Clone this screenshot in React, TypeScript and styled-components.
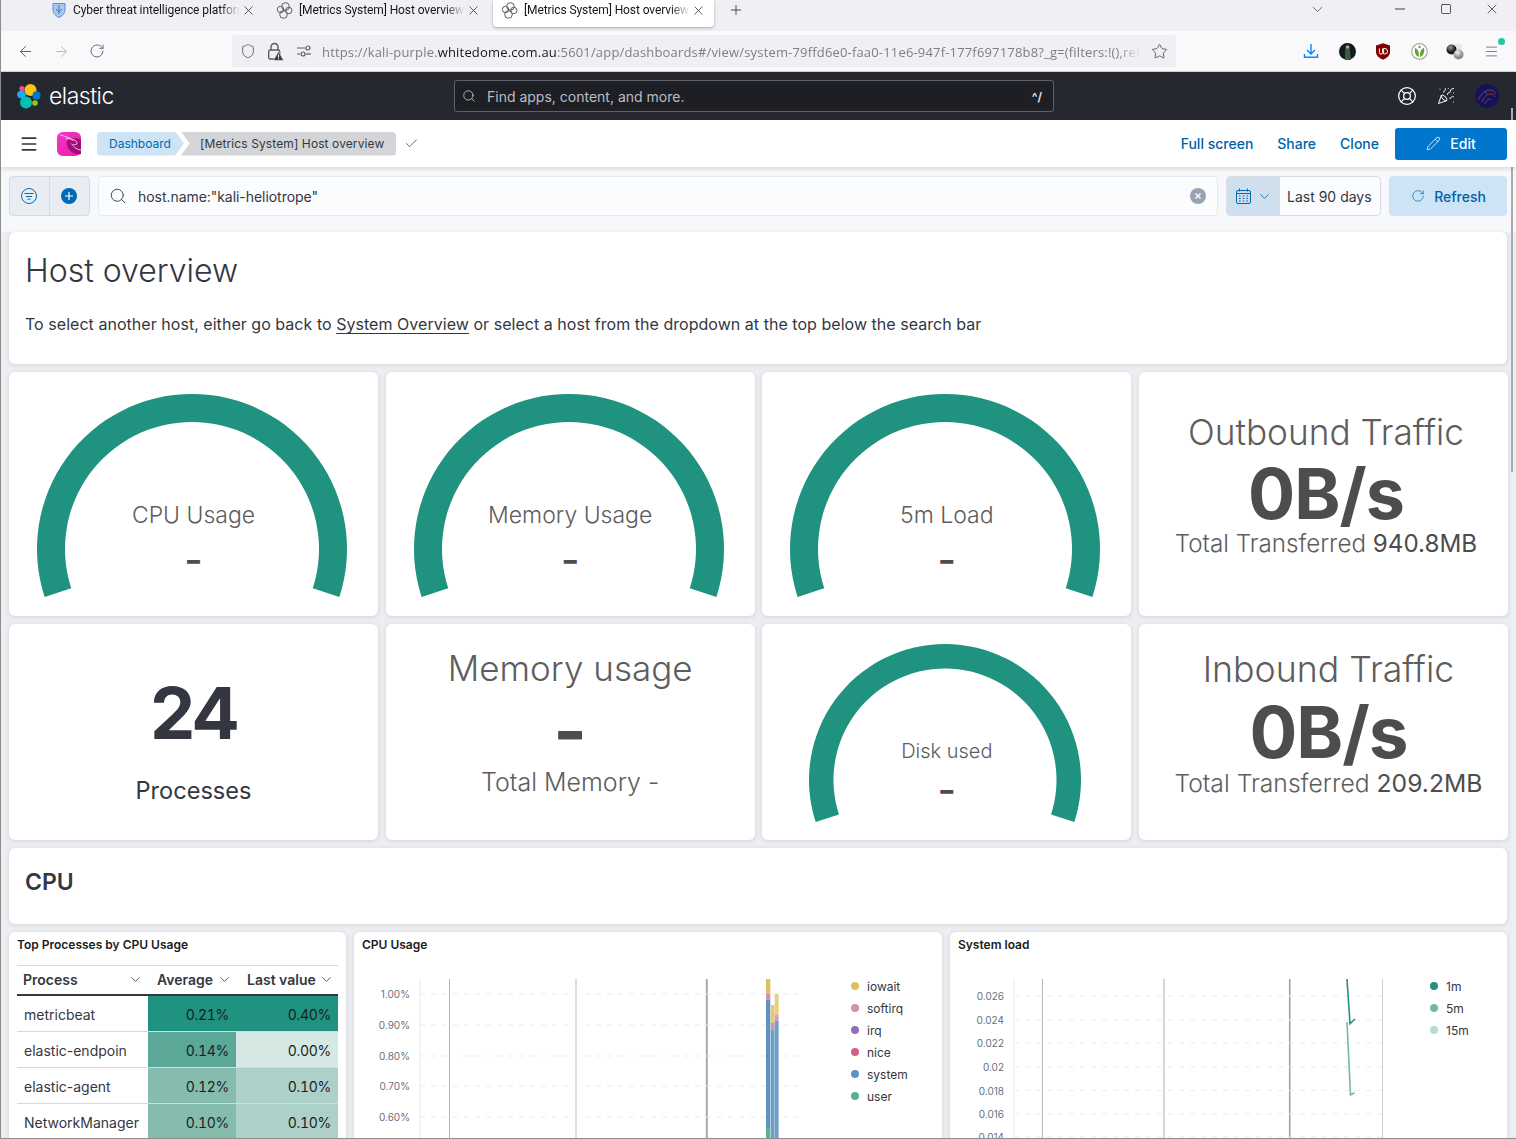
import React from "react";
import styled, { createGlobalStyle } from "styled-components";
import {
  ArrowLeft,
  ArrowRight,
  Check,
  ChevronDown,
  LifeBuoy,
  Menu,
  Minus,
  PartyPopper,
  Pencil,
  Plus,
  RotateCw,
  Search,
  Shield,
  Square,
  Star,
  X,
} from "lucide-react";

const GlobalStyle = createGlobalStyle`
  html, body {
    margin: 0;
    padding: 0;
    background: #f5f7fa;
    font-family: Inter, "Liberation Sans", sans-serif;
  }
  * {
    box-sizing: border-box;
  }
`;

const TEAL = "#209280";

const polar = (cx: number, cy: number, r: number, deg: number) => {
  const a = (deg * Math.PI) / 180;
  return [cx + r * Math.cos(a), cy - r * Math.sin(a)];
};

// arc from the lower left round the top to the lower right
const gaugePath = (r: number, thickness: number) => {
  const inner = r - thickness;
  const sweep = 18;
  const [ax, ay] = polar(r, r, r, 180 + sweep);
  const [bx, by] = polar(r, r, r, -sweep);
  const [cx, cy] = polar(r, r, inner, -sweep);
  const [dx, dy] = polar(r, r, inner, 180 + sweep);
  return `M${ax} ${ay}A${r} ${r} 0 1 1 ${bx} ${by}L${cx} ${cy}A${inner} ${inner} 0 1 0 ${dx} ${dy}Z`;
};

const Gauge = ({
  radius,
  thickness,
  label,
  labelSize,
  top,
  gap,
}: {
  radius: number;
  thickness: number;
  label: string;
  labelSize: number;
  top: number;
  gap: number;
}) => (
  <GaugeBox>
    <svg width={radius * 2} height={radius * 1.32} aria-hidden="true">
      <path d={gaugePath(radius, thickness)} fill={TEAL} />
    </svg>
    <GaugeText $top={top} $gap={gap}>
      <GaugeLabel $size={labelSize}>{label}</GaugeLabel>
      <GaugeDash>-</GaugeDash>
    </GaugeText>
  </GaugeBox>
);

const ElasticMark = () => (
  <svg width="26" height="26" viewBox="0 0 26 26" aria-hidden="true">
    <circle cx="14.5" cy="7" r="6" fill="#fec514" />
    <ellipse cx="5.5" cy="11.5" rx="4.5" ry="4" fill="#1ba9f5" />
    <circle cx="6" cy="5.5" r="2.6" fill="#f04e98" />
    <ellipse cx="20.5" cy="12.5" rx="4" ry="4.2" fill="#0077cc" />
    <circle cx="10" cy="19.5" r="6" fill="#00bfb3" />
    <circle cx="19" cy="20" r="2.8" fill="#93c90e" />
  </svg>
);

const KaliMark = () => (
  <svg width="24" height="24" viewBox="0 0 25 25" aria-hidden="true">
    <defs>
      <linearGradient id="kali" x1="0" y1="0" x2="1" y2="1">
        <stop offset="0" stopColor="#f237c9" />
        <stop offset="1" stopColor="#e81f9f" />
      </linearGradient>
    </defs>
    <rect width="25" height="25" rx="6" fill="url(#kali)" />
    <path d="M10 11c2-6 9-6 15-3v15c-6 1-11-2-14-7z" fill="#a30d7b" />
    <path
      d="M3 3c5 1 9 3 12 4 4 1 6 3 6 5 0 1-2 1-4 1M9 7c3-1 6 1 8 2M15 12c3 4 5 6 10 7"
      fill="none"
      stroke="#f8d4ee"
      strokeWidth="0.9"
    />
  </svg>
);

const FilterCircle = () => (
  <svg width="16" height="16" viewBox="0 0 16 16" fill="none" stroke="#006bb4" aria-hidden="true">
    <circle cx="8" cy="8" r="7.5" />
    <path d="M3.5 5.5h9M5 8.5h6M6.5 11.2h3" />
  </svg>
);

const PlusCircle = () => (
  <svg width="16" height="16" viewBox="0 0 16 16" aria-hidden="true">
    <circle cx="8" cy="8" r="8" fill="#006bb4" />
    <path d="M8 4v8M4 8h8" stroke="#fff" strokeWidth="1.2" />
  </svg>
);

const CalendarIcon = () => (
  <svg width="15" height="16" viewBox="0 0 15 16" fill="none" stroke="#006bb4" aria-hidden="true">
    <rect x="0.5" y="2.5" width="14" height="13" rx="1.5" />
    <path d="M0.5 5.5h14M3.5 0.5v3M11.5 0.5v3" />
    <path
      d="M3 8h1.6M6.7 8h1.6M10.4 8h1.6M3 10.5h1.6M6.7 10.5h1.6M10.4 10.5h1.6M3 13h1.6M6.7 13h1.6M10.4 13h1.6"
      strokeWidth="1.2"
    />
  </svg>
);

const ClearIcon = () => (
  <svg width="16" height="16" viewBox="0 0 16 16" aria-hidden="true">
    <circle cx="8" cy="8" r="8" fill="#98a2b3" />
    <path d="M5.5 5.5l5 5M10.5 5.5l-5 5" stroke="#fff" strokeWidth="1.4" />
  </svg>
);

const ShieldTab = () => (
  <svg width="16" height="16" viewBox="0 0 16 16" aria-hidden="true">
    <path d="M2 1.5h12v6.5c0 3.5-3 6-6 7.5-3-1.5-6-4-6-7.5z" fill="#a9c8ee" stroke="#5b8fd6" />
    <path d="M8 3v9M5 7l3 3 3-3" stroke="#3f74c4" fill="none" />
  </svg>
);

const BlobTab = () => (
  <svg width="17" height="17" viewBox="0 0 17 17" fill="none" stroke="#5b5b66" aria-hidden="true">
    <circle cx="9.5" cy="4.5" r="3.8" />
    <circle cx="4.5" cy="7.5" r="3.2" />
    <circle cx="12.8" cy="8.5" r="3.2" />
    <circle cx="7.5" cy="12.5" r="3.8" />
  </svg>
);

const LockWarning = () => (
  <svg width="17" height="19" viewBox="0 0 17 19" aria-hidden="true">
    <path d="M4 8V5a3.5 3.5 0 017 0v3" fill="none" stroke="#5b5b66" strokeWidth="1.4" />
    <rect x="1.7" y="8" width="11" height="9" rx="1.5" fill="none" stroke="#5b5b66" strokeWidth="1.4" />
    <path d="M11.5 9.5l5.2 9h-10.4z" fill="#3a3a40" stroke="#f0f0f4" strokeWidth="0.6" />
    <path d="M11.5 12.5v3M11.5 16.3v1" stroke="#fff" strokeWidth="1" />
  </svg>
);

const PermissionIcon = () => (
  <svg width="16" height="14" viewBox="0 0 16 14" fill="none" stroke="#5b5b66" strokeWidth="1.2" aria-hidden="true">
    <path d="M1 4h8M1 10h3" />
    <circle cx="12" cy="4" r="2" />
    <circle cx="7" cy="10" r="2" />
    <path d="M10 10h5" />
  </svg>
);

const DownloadIcon = () => (
  <svg width="16" height="16" viewBox="0 0 16 16" fill="none" stroke="#0a84ff" strokeWidth="1.4" aria-hidden="true">
    <path d="M8 1v9.5M4 7l4 4 4-4M1.5 11v3.2h13V11" />
  </svg>
);

const PhotoExt = () => (
  <svg width="17" height="17" viewBox="0 0 17 17" aria-hidden="true">
    <circle cx="8.5" cy="8.5" r="8.5" fill="#101c1e" />
    <path d="M7 3h3l1 4 1 10H6l0-10z" fill="#3a5a44" />
    <circle cx="8.6" cy="4" r="1.8" fill="#b9a68a" />
  </svg>
);

const UblockExt = () => (
  <svg width="16" height="17" viewBox="0 0 16 17" aria-hidden="true">
    <path d="M8 0.3l7 2.2v6.5c0 3.5-3.5 6.3-7 7.7C4.5 15.3 1 12.5 1 9V2.5z" fill="#800000" />
    <path d="M4.4 5.5v4a1.6 1.6 0 003.2 0v-4M8.6 5.5v5.5h1.2a2.7 2.7 0 000-5.5z" fill="none" stroke="#fff" strokeWidth="1" />
  </svg>
);

const GreenExt = () => (
  <svg width="17" height="17" viewBox="0 0 17 17" aria-hidden="true">
    <circle cx="8.5" cy="8.5" r="7.8" fill="#fff" stroke="#a8aba3" strokeWidth="1.2" />
    <path d="M4 5c3 1 4 3 4 9-3-1-5-4-4-9zM13 5c-3 1-4 3-4 9 3-1 5-4 4-9z" fill="#6aa232" />
    <circle cx="8.5" cy="4" r="1.2" fill="#6aa232" />
  </svg>
);

const BallsExt = () => (
  <svg width="18" height="17" viewBox="0 0 18 17" aria-hidden="true">
    <defs>
      <radialGradient id="ballDark" cx="0.4" cy="0.3">
        <stop offset="0" stopColor="#9a9a9a" />
        <stop offset="1" stopColor="#141414" />
      </radialGradient>
      <radialGradient id="ballLight" cx="0.4" cy="0.3">
        <stop offset="0" stopColor="#f2f2f2" />
        <stop offset="1" stopColor="#8c8c8c" />
      </radialGradient>
    </defs>
    <circle cx="12" cy="4.5" r="4" fill="#e6e6e6" />
    <circle cx="5.5" cy="6.5" r="5" fill="url(#ballDark)" />
    <circle cx="12.5" cy="11.5" r="5" fill="url(#ballLight)" />
  </svg>
);

const Avatar = () => (
  <svg width="24" height="24" viewBox="0 0 24 24" aria-hidden="true">
    <circle cx="12" cy="12" r="12" fill="#14125a" />
    <path
      d="M3 16c3-6 7-10 12-10 3 0 5 2 6 4M7 18c2-5 5-8 9-8 2 0 3 1 4 3M10 20c1-3 3-5 6-5M9 7l3 3"
      fill="none"
      stroke="#a33a3a"
      strokeWidth="0.9"
    />
  </svg>
);

const cpuStack = [
  { x: 412, w: 4.3, parts: [[47, 15, "#dfc05a"], [62, 6, "#d590b3"], [68, 127, "#6092c0"], [195, 11, "#54b399"]] },
  { x: 416.7, w: 3.8, parts: [[73, 18, "#e3cb75"], [91, 7, "#d590b3"], [98, 110, "#6f9ec8"]] },
  { x: 420.7, w: 3.9, parts: [[62, 21, "#e6d07f"], [83, 6, "#d99cbc"], [89, 119, "#6f9ec8"]] },
] as const;

const VerticalLines = ({ lines, height }: { lines: [number, number, string][]; height: number }) => (
  <>
    {lines.map(([x, w, c]) => (
      <line key={x} x1={x} x2={x} y1={47} y2={height} stroke={c} strokeWidth={w} />
    ))}
  </>
);

const CpuChart = () => (
  <ChartSvg width="490" height="207" aria-hidden="true">
    <line x1="66" x2="66" y1="47" y2="207" stroke="#eef0f3" strokeWidth="1.5" />
    <VerticalLines
      height={207}
      lines={[
        [95.5, 1, "#b5b5b5"],
        [222, 1.2, "#c8c8c8"],
        [352.8, 2, "#a8a8a8"],
      ]}
    />
    {[
      [62, "1.00%"],
      [93, "0.90%"],
      [124, "0.80%"],
      [154, "0.70%"],
      [185, "0.60%"],
    ].map(([y, t]) => (
      <g key={t}>
        <line x1="66" x2="448" y1={y} y2={y} stroke="#e9ebee" strokeDasharray="5 6" />
        <AxisText x="56" y={Number(y) + 4} textAnchor="end">
          {t}
        </AxisText>
      </g>
    ))}
    {cpuStack.map((bar) =>
      bar.parts.map(([y, h, c]) => (
        <rect key={`${bar.x}-${y}`} x={bar.x} y={y} width={bar.w} height={h} fill={c} />
      )),
    )}
  </ChartSvg>
);

const LoadChart = () => (
  <ChartSvg width="473" height="207" aria-hidden="true">
    <line x1="64" x2="64" y1="47" y2="207" stroke="#eef0f3" strokeWidth="1.5" />
    <VerticalLines
      height={207}
      lines={[
        [92.4, 1, "#b5b5b5"],
        [214, 1.5, "#c8c8c8"],
        [339.7, 1.5, "#9c9c9c"],
        [432.5, 1, "#cfcfcf"],
      ]}
    />
    {[
      [64.3, "0.026"],
      [88, "0.024"],
      [111, "0.022"],
      [135, "0.02"],
      [158.5, "0.018"],
      [182, "0.016"],
      [205, "0.014"],
    ].map(([y, t]) => (
      <g key={t}>
        <line x1="64" x2="433" y1={y} y2={y} stroke="#e9ebee" strokeDasharray="5 6" />
        <AxisText x="54" y={Number(y) + 4} textAnchor="end">
          {t}
        </AxisText>
      </g>
    ))}
    <polyline points="397,47 400,91.7 405,87" fill="none" stroke={TEAL} strokeWidth="1.6" />
    <polyline points="397,90 400.5,163 404.5,160.7" fill="none" stroke="#73b8a8" strokeWidth="1.6" />
  </ChartSvg>
);

const cpuLegend = [
  ["iowait", "#dfc05a"],
  ["softirq", "#d590b3"],
  ["irq", "#9170b8"],
  ["nice", "#d36086"],
  ["system", "#6092c0"],
  ["user", "#54b399"],
];
const loadLegend = [
  ["1m", TEAL],
  ["5m", "#73b8a8"],
  ["15m", "#b8dacf"],
];

const processes = [
  ["metricbeat", "0.21%", "#209280", "0.40%", "#209280"],
  ["elastic-endpoin", "0.14%", "#5ba899", "0.00%", "#d6e8e3"],
  ["elastic-agent", "0.12%", "#86bcae", "0.10%", "#add1c8"],
  ["NetworkManager", "0.10%", "#86bcae", "0.10%", "#add1c8"],
];

const Legend = ({ items }: { items: string[][] }) => (
  <LegendList>
    {items.map(([name, color]) => (
      <LegendItem key={name}>
        <LegendDot $color={color} />
        {name}
      </LegendItem>
    ))}
  </LegendList>
);

const TabItem = ({ icon, title, active }: { icon: React.ReactNode; title: string; active?: boolean }) => (
  <Tab $active={active}>
    {icon}
    <TabTitle>{title}</TabTitle>
    <X size={15} strokeWidth={1.2} color="#2b2a33" />
  </Tab>
);

export default function App() {
  return (
    <Page>
      <GlobalStyle />
      <TabStrip>
        <TabItem icon={<ShieldTab />} title="Cyber threat intelligence platform" />
        <TabItem icon={<BlobTab />} title="[Metrics System] Host overview" />
        <TabItem icon={<BlobTab />} title="[Metrics System] Host overview" active />
        <NewTab>
          <Plus size={16} strokeWidth={1.2} color="#2b2a33" />
        </NewTab>
        <WindowControls>
          <ChevronDown size={17} strokeWidth={1.2} color="#55555e" />
          <WindowButtons>
            <Minus size={16} strokeWidth={1.2} color="#111" />
            <Square size={12} strokeWidth={1.4} color="#111" />
            <X size={16} strokeWidth={1} color="#111" />
          </WindowButtons>
        </WindowControls>
      </TabStrip>

      <NavBar>
        <NavButtons>
          <NavButton>
            <ArrowLeft size={17} strokeWidth={1.3} color="#55555e" />
          </NavButton>
          <NavButton>
            <ArrowRight size={17} strokeWidth={1.3} color="#b5b5ba" />
          </NavButton>
          <NavButton>
            <RotateCw size={16} strokeWidth={1.3} color="#55555e" />
          </NavButton>
        </NavButtons>
        <UrlBar>
          <Shield size={16} strokeWidth={1.3} color="#55555e" />
          <LockWarning />
          <PermissionIcon />
          <UrlText>
            https://kali-purple.<b>whitedome.com.au</b>:5601/app/dashboards#/view/system-79ffd6e0-faa0-11e6-947f-177f697178b8?_g=(filters:!(),refreshInterval
          </UrlText>
          <Star size={17} strokeWidth={1.3} color="#55555e" />
        </UrlBar>
        <Extensions>
          <NavButton>
            <DownloadIcon />
          </NavButton>
          <NavButton>
            <PhotoExt />
          </NavButton>
          <NavButton>
            <UblockExt />
          </NavButton>
          <NavButton>
            <GreenExt />
          </NavButton>
          <NavButton>
            <BallsExt />
          </NavButton>
          <NavButton>
            <Menu size={15} strokeWidth={1.2} color="#55555e" />
            <UpdateDot />
          </NavButton>
        </Extensions>
      </NavBar>

      <KibanaHeader>
        <Brand>
          <ElasticMark />
          <BrandName>elastic</BrandName>
        </Brand>
        <GlobalSearch>
          <Search size={14} strokeWidth={1.3} color="#d4dae5" />
          <GlobalSearchText>Find apps, content, and more.</GlobalSearchText>
          <Shortcut>^/</Shortcut>
        </GlobalSearch>
        <HeaderIcons>
          <LifeBuoy size={20} strokeWidth={1.5} color="#fff" />
          <PartyPopper size={18} strokeWidth={1.3} color="#fff" />
          <Avatar />
        </HeaderIcons>
      </KibanaHeader>

      <AppBar>
        <Menu size={20} strokeWidth={2} color="#343741" />
        <KaliSlot>
          <KaliMark />
        </KaliSlot>
        <Crumbs>
          <CrumbLink>Dashboard</CrumbLink>
          <CrumbCurrent>[Metrics System] Host overview</CrumbCurrent>
        </Crumbs>
        <Check size={15} strokeWidth={1.2} color="#343741" />
        <AppActions>
          <ActionLink>Full screen</ActionLink>
          <ActionLink>Share</ActionLink>
          <ActionLink>Clone</ActionLink>
          <EditButton>
            <Pencil size={15} strokeWidth={1.3} color="#fff" />
            Edit
          </EditButton>
        </AppActions>
      </AppBar>

      <QueryBar>
        <FilterGroup>
          <FilterCell>
            <FilterCircle />
          </FilterCell>
          <FilterCell>
            <PlusCircle />
          </FilterCell>
        </FilterGroup>
        <QueryInput>
          <Search size={18} strokeWidth={1.2} color="#343741" />
          <QueryText>host.name:"kali-heliotrope"</QueryText>
          <ClearIcon />
        </QueryInput>
        <DatePicker>
          <DateToggle>
            <CalendarIcon />
            <ChevronDown size={15} strokeWidth={1.4} color="#006bb4" />
          </DateToggle>
          <DateValue>Last 90 days</DateValue>
        </DatePicker>
        <RefreshButton>
          <RotateCw size={14} strokeWidth={1.2} color="#006bb4" />
          Refresh
        </RefreshButton>
      </QueryBar>

      <Dashboard>
        <IntroPanel>
          <IntroTitle>Host overview</IntroTitle>
          <IntroText>
            To select another host, either go back to <IntroLink>System Overview</IntroLink> or select a host from the dropdown at the top below the search bar
          </IntroText>
        </IntroPanel>

        <MetricGrid>
          <GaugePanel>
            <Gauge radius={155} thickness={28} label="CPU Usage" labelSize={23} top={106} gap={15} />
          </GaugePanel>
          <GaugePanel>
            <Gauge radius={155} thickness={28} label="Memory Usage" labelSize={23} top={106} gap={15} />
          </GaugePanel>
          <GaugePanel>
            <Gauge radius={155} thickness={28} label="5m Load" labelSize={23} top={106} gap={15} />
          </GaugePanel>
          <TrafficPanel $shift={5}>
            <MetricTitle $size={35.2}>Outbound Traffic</MetricTitle>
            <TrafficValue>0B/s</TrafficValue>
            <MetricFoot $size={24.2}>
              Total Transferred <strong>940.8MB</strong>
            </MetricFoot>
          </TrafficPanel>
          <ProcessPanel>
            <ProcessCount>24</ProcessCount>
            <ProcessLabel>Processes</ProcessLabel>
          </ProcessPanel>
          <MemoryPanel>
            <MetricTitle $size={35}>Memory usage</MetricTitle>
            <MemoryDash>-</MemoryDash>
            <MetricFoot $size={25}>Total Memory -</MetricFoot>
          </MemoryPanel>
          <DiskPanel>
            <Gauge radius={136} thickness={24.5} label="Disk used" labelSize={20} top={92} gap={9} />
          </DiskPanel>
          <InboundPanel $shift={10}>
            <MetricTitle $size={35.7}>Inbound Traffic</MetricTitle>
            <InboundValue>0B/s</InboundValue>
            <MetricFoot $size={24.7}>
              Total Transferred <strong>209.2MB</strong>
            </MetricFoot>
          </InboundPanel>
        </MetricGrid>

        <SectionPanel>
          <SectionTitle>CPU</SectionTitle>
        </SectionPanel>

        <ChartRow>
          <TablePanel>
            <PanelTitle>Top Processes by CPU Usage</PanelTitle>
            <ProcessTable>
              <HeadRow>
                <HeadCell>
                  Process
                  <ChevronDown size={15} strokeWidth={1.3} color="#343741" />
                </HeadCell>
                <HeadCell>
                  Average
                  <ChevronDown size={15} strokeWidth={1.3} color="#343741" />
                </HeadCell>
                <HeadCell>
                  Last value
                  <ChevronDown size={15} strokeWidth={1.3} color="#343741" />
                </HeadCell>
              </HeadRow>
              {processes.map(([name, avg, avgColor, last, lastColor]) => (
                <BodyRow key={name}>
                  <NameCell>{name}</NameCell>
                  <ValueCell $bg={avgColor}>{avg}</ValueCell>
                  <ValueCell $bg={lastColor}>{last}</ValueCell>
                </BodyRow>
              ))}
            </ProcessTable>
          </TablePanel>

          <ChartPanel>
            <PanelTitle>CPU Usage</PanelTitle>
            <CpuChart />
            <Legend items={cpuLegend} />
          </ChartPanel>

          <ChartPanel>
            <PanelTitle>System load</PanelTitle>
            <LoadChart />
            <Legend items={loadLegend} />
          </ChartPanel>
        </ChartRow>
      </Dashboard>
      <ScrollThumb />
    </Page>
  );
}

const Page = styled.div`
  position: relative;
  width: 1516px;
  height: 1139px;
  overflow: hidden;
  display: flex;
  flex-direction: column;
  background: #f5f7fa;
  border-left: 1px solid #8d8d8d;
  border-bottom: 1px solid #8d8d8d;
`;

const TabStrip = styled.div`
  flex: 0 0 31px;
  display: flex;
  gap: 4px;
  padding-left: 42px;
  background: #f0f0f4;
  align-items: flex-start;
`;

const Tab = styled.div<{ $active?: boolean }>`
  width: 221px;
  height: 27px;
  display: flex;
  align-items: center;
  gap: 6px;
  padding: 0 8px 7px 8px;
  background: ${({ $active }) => ($active ? "#fff" : "transparent")};
  border-radius: 0 0 4px 4px;
  box-shadow: ${({ $active }) => ($active ? "0 1px 3px rgba(0,0,0,.3)" : "none")};
  svg {
    flex: none;
  }
  svg:last-child {
    margin-left: -5px;
  }
`;

const TabTitle = styled.span`
  flex: 1;
  font-family: Roboto, sans-serif;
  font-size: 12px;
  letter-spacing: -0.1px;
  color: #15141a;
  white-space: nowrap;
  overflow: hidden;
  -webkit-mask-image: linear-gradient(to right, #000 88%, transparent);
  mask-image: linear-gradient(to right, #000 88%, transparent);
`;

const NewTab = styled.div`
  margin: 2px 0 0 10px;
  height: 16px;
`;

const WindowControls = styled.div`
  margin-left: auto;
  display: flex;
  align-items: center;
  height: 18px;
  padding-right: 16px;
  gap: 66px;
`;

const WindowButtons = styled.div`
  display: flex;
  align-items: center;
  gap: 32px;
`;

const NavBar = styled.div`
  flex: 0 0 41px;
  display: flex;
  align-items: center;
  padding: 0 6px;
  background: #f9f9fb;
  border-bottom: 1px solid #cfcfd8;
`;

const NavButtons = styled.div`
  display: flex;
  width: 225px;
`;

const NavButton = styled.div`
  position: relative;
  width: 36px;
  height: 30px;
  display: flex;
  align-items: center;
  justify-content: center;
`;

const UrlBar = styled.div`
  width: 944px;
  height: 32px;
  display: flex;
  align-items: center;
  gap: 10px;
  padding: 0 8px;
  background: #f0f0f4;
  border-radius: 4px;
  svg {
    flex: none;
  }
  svg:nth-of-type(2) {
    margin-left: 1px;
  }
  svg:nth-of-type(3) {
    margin-left: 2px;
  }
`;

const UrlText = styled.div`
  width: 820px;
  padding-top: 1px;
  font-family: "Open Sans", sans-serif;
  font-size: 13px;
  letter-spacing: 0.17px;
  color: #7d7d85;
  white-space: nowrap;
  overflow: hidden;
  -webkit-mask-image: linear-gradient(to right, #000 97%, transparent);
  mask-image: linear-gradient(to right, #000 97%, transparent);
  b {
    font-weight: 400;
    color: #15141a;
  }
`;

const Extensions = styled.div`
  display: flex;
  margin-left: 117px;
`;

const UpdateDot = styled.span`
  position: absolute;
  top: 2px;
  right: 4px;
  width: 7px;
  height: 7px;
  border-radius: 50%;
  background: #2ac3a2;
`;

const KibanaHeader = styled.header`
  flex: 0 0 48px;
  display: grid;
  grid-template-columns: 453px 600px 1fr;
  align-items: center;
  background: #25282f;
`;

const Brand = styled.div`
  display: flex;
  align-items: center;
  gap: 7px;
  padding-left: 15px;
`;

const BrandName = styled.span`
  font-size: 23px;
  font-weight: 300;
  color: #fff;
  letter-spacing: -0.5px;
`;

const GlobalSearch = styled.div`
  height: 32px;
  display: flex;
  align-items: center;
  gap: 11px;
  padding: 0 11px 0 7px;
  border: 1px solid #5c6068;
  border-radius: 3px;
  background: #1d1f25;
`;

const GlobalSearchText = styled.span`
  flex: 1;
  font-size: 14px;
  color: #b9bdc5;
`;

const Shortcut = styled.span`
  font-size: 12px;
  font-weight: 600;
  color: #e6e8ec;
`;

const HeaderIcons = styled.div`
  display: flex;
  align-items: center;
  justify-content: flex-end;
  gap: 20px;
  padding-right: 17px;
`;

const AppBar = styled.div`
  position: relative;
  z-index: 1;
  flex: 0 0 47px;
  display: flex;
  align-items: center;
  padding: 0 9px 0 18px;
  background: #fff;
  box-shadow: 0 2px 4px rgba(0, 0, 0, 0.12);
  > svg:last-of-type {
    margin-left: 8px;
  }
`;

const KaliSlot = styled.div`
  display: flex;
  margin: 0 16px 0 18px;
`;

const Crumbs = styled.div`
  display: flex;
  height: 24px;
  font-size: 12px;
  line-height: 24px;
`;

const CrumbLink = styled.span`
  width: 87px;
  padding-left: 12px;
  background: #cce4f5;
  color: #006bb4;
  border-radius: 4px 0 0 4px;
  clip-path: polygon(0 0, 90% 0, 100% 50%, 90% 100%, 0 100%);
`;

const CrumbCurrent = styled.span`
  width: 215px;
  margin-left: -3px;
  padding-left: 19px;
  background: #d3d5d9;
  color: #343741;
  letter-spacing: 0.1px;
  border-radius: 0 4px 4px 0;
  clip-path: polygon(0 0, 100% 0, 100% 100%, 0 100%, 4% 50%);
`;

const AppActions = styled.div`
  margin-left: auto;
  display: flex;
  align-items: center;
  gap: 24px;
`;

const ActionLink = styled.span`
  font-size: 14px;
  font-weight: 500;
  color: #0061a6;
`;

const EditButton = styled.div`
  width: 112px;
  height: 32px;
  margin-left: -8px;
  display: flex;
  align-items: center;
  justify-content: center;
  gap: 9px;
  border-radius: 3px;
  background: #0077cc;
  color: #fff;
  font-size: 14px;
  font-weight: 500;
`;

const QueryBar = styled.div`
  flex: 0 0 65px;
  display: flex;
  gap: 8px;
  padding: 9px 8px 16px 8px;
  background: #f7f8fb;
`;

const FilterGroup = styled.div`
  display: flex;
  width: 81px;
  border: 1px solid #d3dae6;
  border-radius: 4px;
  background: #e9edf3;
`;

const FilterCell = styled.div`
  flex: 1;
  display: flex;
  align-items: center;
  justify-content: center;
  padding-right: 1px;
  & + & {
    border-left: 1px solid #d3dae6;
  }
`;

const QueryInput = styled.div`
  width: 1120px;
  display: flex;
  align-items: center;
  gap: 11px;
  padding: 0 11px 0 10px;
  border: 1px solid #e4e8f0;
  border-radius: 4px;
  background: #fbfcfd;
`;

const QueryText = styled.span`
  flex: 1;
  font-size: 14px;
  letter-spacing: -0.05px;
  color: #343741;
`;

const DatePicker = styled.div`
  width: 155px;
  display: flex;
  border: 1px solid #d8dde8;
  border-radius: 4px;
  background: #fbfcfd;
  overflow: hidden;
`;

const DateToggle = styled.div`
  width: 53px;
  display: flex;
  align-items: center;
  justify-content: center;
  gap: 6px;
  background: #cfdfee;
`;

const DateValue = styled.div`
  flex: 1;
  display: flex;
  align-items: center;
  padding-left: 7px;
  font-size: 14px;
  color: #343741;
`;

const RefreshButton = styled.div`
  width: 118px;
  display: flex;
  align-items: center;
  justify-content: center;
  gap: 9px;
  padding-left: 1px;
  border-radius: 4px;
  background: #cce4f5;
  color: #0061a6;
  font-size: 14px;
  font-weight: 500;
`;

const ScrollThumb = styled.div`
  position: absolute;
  top: 108px;
  right: 3px;
  width: 2px;
  height: 364px;
  background: #a9abb0;
`;

const Dashboard = styled.main`
  flex: 1;
  min-height: 0;
  display: flex;
  flex-direction: column;
  gap: 8px;
  padding: 0 8px;
  background: #eceef2;
`;

const Panel = styled.section`
  background: #fff;
  border-radius: 6px;
  box-shadow: 0 1px 4px rgba(60, 66, 82, 0.16);
  overflow: hidden;
`;

const IntroPanel = styled(Panel)`
  flex: 0 0 132px;
  padding: 18px 16px 0;
  margin-right: 1px;
`;

const IntroTitle = styled.h1`
  margin: 0;
  font-size: 32px;
  line-height: 42px;
  font-weight: 300;
  color: #343741;
`;

const IntroText = styled.p`
  margin: 20px 0 0;
  font-size: 16px;
  line-height: 24px;
  letter-spacing: 0.037px;
  color: #343741;
`;

const IntroLink = styled.span`
  text-decoration: underline;
  text-underline-offset: 3px;
`;

const MetricGrid = styled.div`
  flex: 0 0 468px;
  display: grid;
  grid-template-columns: repeat(4, 369px);
  grid-template-rows: 244px 216px;
  gap: 8px 7.66px;
`;

const GaugePanel = styled(Panel)`
  display: flex;
  justify-content: center;
  padding: 22px 3px 0 0;
`;

const DiskPanel = styled(GaugePanel)`
  padding-top: 20px;
`;

const GaugeBox = styled.div`
  position: relative;
`;

const GaugeText = styled.div<{ $top: number; $gap: number }>`
  position: absolute;
  top: ${({ $top }) => $top}px;
  left: 0;
  right: -3px;
  display: flex;
  flex-direction: column;
  align-items: center;
  gap: ${({ $gap }) => $gap}px;
`;

const GaugeLabel = styled.span<{ $size: number }>`
  font-size: ${({ $size }) => $size}px;
  line-height: 30px;
  font-weight: 300;
  color: #5d5d5d;
`;

const GaugeDash = styled.span`
  font-size: 40px;
  line-height: 30px;
  font-weight: 500;
  color: #4d4d4d;
`;

const MetricPanel = styled(Panel)`
  display: flex;
  flex-direction: column;
  align-items: center;
  color: #5d5d5d;
`;

const TrafficPanel = styled(MetricPanel)<{ $shift: number }>`
  padding: 37px 0 0 ${({ $shift }) => $shift}px;
`;

const InboundPanel = styled(MetricPanel)<{ $shift: number }>`
  padding: 22px 0 0 ${({ $shift }) => $shift}px;
`;

const MemoryPanel = styled(MetricPanel)`
  padding-top: 21px;
`;

const MetricTitle = styled.div<{ $size: number }>`
  font-size: ${({ $size }) => $size}px;
  line-height: 46px;
  font-weight: 300;
  white-space: nowrap;
`;

const TrafficValue = styled.div`
  margin-top: 4px;
  font-size: 70px;
  line-height: 70px;
  font-weight: 700;
  color: #4d4d4d;
  letter-spacing: -1px;
`;

const InboundValue = styled(TrafficValue)`
  margin-top: 5px;
  font-size: 71px;
  line-height: 71px;
`;

const MemoryDash = styled.div`
  margin-top: 4px;
  font-size: 72px;
  line-height: 72px;
  font-weight: 700;
  color: #4d4d4d;
`;

const MetricFoot = styled.div<{ $size: number }>`
  font-size: ${({ $size }) => $size}px;
  line-height: 30px;
  font-weight: 300;
  white-space: nowrap;
  strong {
    font-weight: 400;
    color: #4d4d4d;
  }
`;

const ProcessPanel = styled(MetricPanel)`
  padding-top: 44px;
`;

const ProcessCount = styled.div`
  font-size: 72px;
  line-height: 90px;
  font-weight: 700;
  letter-spacing: -3px;
  color: #343741;
`;

const ProcessLabel = styled.div`
  margin-top: 18px;
  font-size: 23.6px;
  line-height: 30px;
  color: #343741;
`;

const SectionPanel = styled(Panel)`
  flex: 0 0 76px;
  padding: 18px 16px;
  margin-right: 1px;
`;

const SectionTitle = styled.h2`
  margin: 0;
  font-size: 23px;
  line-height: 32px;
  font-weight: 600;
  color: #343741;
`;

const ChartRow = styled.div`
  flex: 1;
  min-height: 0;
  display: grid;
  grid-template-columns: 337px 588px 557px;
  gap: 8px;
`;

const TablePanel = styled(Panel)`
  border-radius: 6px 6px 0 0;
  padding: 6px 8px 0;
`;

const ChartPanel = styled(Panel)`
  position: relative;
  display: grid;
  grid-template-columns: auto 1fr;
  grid-template-rows: auto 1fr;
  border-radius: 6px 6px 0 0;
`;

const PanelTitle = styled.h3`
  margin: 0;
  font-size: 12px;
  line-height: 14px;
  font-weight: 600;
  color: #1a1c21;
  ${ChartPanel} > & {
    position: absolute;
    top: 6px;
    left: 8px;
  }
`;

const ChartSvg = styled.svg`
  display: block;
`;

const AxisText = styled.text`
  font-family: Inter, sans-serif;
  font-size: 10px;
  fill: #69707d;
`;

const LegendList = styled.ul`
  list-style: none;
  margin: 0;
  padding: 47px 0 0 7px;
  display: flex;
  flex-direction: column;
  gap: 8px;
`;

const LegendItem = styled.li`
  display: flex;
  align-items: center;
  gap: 8px;
  height: 14px;
  font-size: 12px;
  color: #343741;
`;

const LegendDot = styled.span<{ $color: string }>`
  width: 8px;
  height: 8px;
  border-radius: 50%;
  background: ${({ $color }) => $color};
`;

const ProcessTable = styled.div`
  margin-top: 13px;
  border-top: 1px solid #d3dae6;
`;

const HeadRow = styled.div`
  display: grid;
  grid-template-columns: 131px 88px 102px;
  height: 30px;
  padding-bottom: 1px;
  border-bottom: 2px solid #343741;
`;

const HeadCell = styled.div`
  display: flex;
  align-items: center;
  justify-content: space-between;
  padding: 0 5px 0 6px;
  font-size: 14px;
  font-weight: 600;
  color: #343741;
  white-space: nowrap;
  & + & {
    padding: 0 4px 0 9px;
  }
  & + & + & {
    padding: 0 4px 0 11px;
  }
`;

const BodyRow = styled.div`
  display: grid;
  grid-template-columns: 131px 88px 102px;
  height: 36px;
  border-bottom: 1px solid #d3dae6;
`;

const NameCell = styled.div`
  display: flex;
  align-items: center;
  padding: 2px 0 0 7px;
  font-size: 14px;
  color: #343741;
  white-space: nowrap;
`;

const ValueCell = styled.div<{ $bg: string }>`
  display: flex;
  align-items: center;
  justify-content: flex-end;
  padding: 2px 7px 0 0;
  font-size: 14px;
  font-variant-numeric: tabular-nums;
  letter-spacing: -0.3px;
  color: #1a1c21;
  background: ${({ $bg }) => $bg};
`;
